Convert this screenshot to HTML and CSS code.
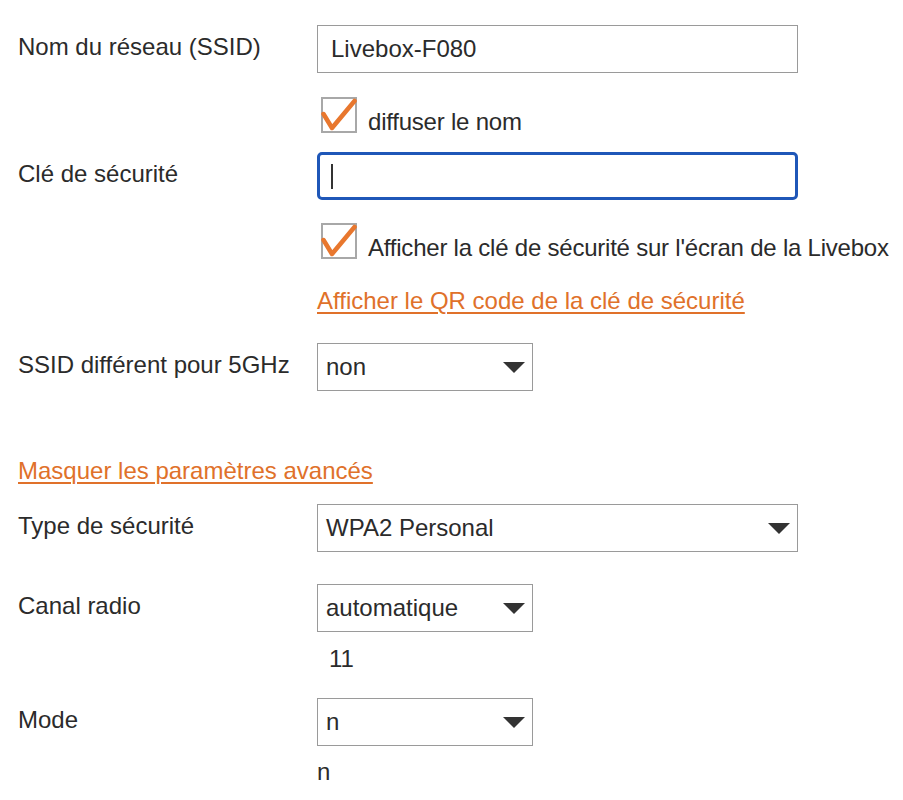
FILE: index.html
```html
<!DOCTYPE html>
<html lang="fr">
<head>
<meta charset="utf-8">
<link rel="stylesheet" href="styles.css">
<title>Wi-Fi</title>
</head>
<body>
<div class="form">
  <div class="row r-ssid">
    <div class="label">Nom du réseau (SSID)</div>
    <div class="ctrl">
      <div class="input wide"><span class="val">Livebox-F080</span></div>
    </div>
  </div>
  <div class="row r-cb1">
    <div class="label"></div>
    <div class="ctrl check">
      <span class="box"><svg width="36" height="36" viewBox="0 0 36 36"><path d="M2.5 17 L11 31 L33.5 4" fill="none" stroke="#e8772e" stroke-width="4.5" stroke-linecap="round" stroke-linejoin="round"/></svg></span>
      <span class="ctext">diffuser le nom</span>
    </div>
  </div>
  <div class="row r-key">
    <div class="label">Clé de sécurité</div>
    <div class="ctrl">
      <div class="input wide focused"><span class="caret"></span></div>
    </div>
  </div>
  <div class="row r-cb2">
    <div class="label"></div>
    <div class="ctrl check">
      <span class="box"><svg width="36" height="36" viewBox="0 0 36 36"><path d="M2.5 17 L11 31 L33.5 4" fill="none" stroke="#e8772e" stroke-width="4.5" stroke-linecap="round" stroke-linejoin="round"/></svg></span>
      <span class="ctext">Afficher la clé de sécurité sur l'écran de la Livebox</span>
    </div>
  </div>
  <div class="row r-qr">
    <div class="label"></div>
    <div class="ctrl"><a class="link" href="#">Afficher le QR code de la clé de sécurité</a></div>
  </div>
  <div class="row r-5g">
    <div class="label">SSID différent pour 5GHz</div>
    <div class="ctrl">
      <div class="select small"><span class="val">non</span><svg class="arrow" width="22" height="11" viewBox="0 0 22 11"><path d="M0 0 H22 L11 11 Z" fill="#333"/></svg></div>
    </div>
  </div>
  <div class="row r-adv">
    <a class="link" href="#">Masquer les paramètres avancés</a>
  </div>
  <div class="row r-type">
    <div class="label">Type de sécurité</div>
    <div class="ctrl">
      <div class="select wide"><span class="val">WPA2 Personal</span><svg class="arrow" width="22" height="11" viewBox="0 0 22 11"><path d="M0 0 H22 L11 11 Z" fill="#333"/></svg></div>
    </div>
  </div>
  <div class="row r-canal">
    <div class="label">Canal radio</div>
    <div class="ctrl">
      <div class="select small"><span class="val">automatique</span><svg class="arrow" width="22" height="11" viewBox="0 0 22 11"><path d="M0 0 H22 L11 11 Z" fill="#333"/></svg></div>
      <div class="note indent">11</div>
    </div>
  </div>
  <div class="row r-mode">
    <div class="label">Mode</div>
    <div class="ctrl">
      <div class="select small"><span class="val">n</span><svg class="arrow" width="22" height="11" viewBox="0 0 22 11"><path d="M0 0 H22 L11 11 Z" fill="#333"/></svg></div>
      <div class="note">n</div>
    </div>
  </div>
</div>
</body>
</html>
```
FILE: styles.css
```css
html, body {
  margin: 0;
  padding: 0;
  background: #fff;
}
body {
  font-family: "Liberation Sans", Arial, Helvetica, sans-serif;
  font-size: 24px;
  line-height: 30px;
  color: #2b2b2b;
}
.form {
  padding: 25px 0 0 18px;
  display: flex;
  flex-direction: column;
}
.row {
  display: flex;
  align-items: flex-start;
}
.label {
  width: 299px;
  flex: none;
  padding-top: 7px;
}
.ctrl {
  display: flex;
  flex-direction: column;
}
.input, .select {
  box-sizing: border-box;
  height: 48px;
  border: 1.5px solid #9a9a9a;
  background: #fff;
  display: flex;
  align-items: center;
}
.wide { width: 481px; }
.small { width: 216px; }
.input { padding-left: 13px; }
.input.focused {
  border: 3px solid #1f57b8;
  border-radius: 5px;
  padding-left: 11px;
}
.caret {
  display: inline-block;
  width: 2px;
  height: 25px;
  background: #333;
}
.select {
  padding: 0 7px 0 8px;
  justify-content: space-between;
}
.arrow { flex: none; margin-top: 1px; }
.check {
  flex-direction: row;
  align-items: flex-start;
  padding-left: 4px;
}
.box {
  box-sizing: border-box;
  width: 36px;
  height: 36px;
  border: 2px solid #a8a8a8;
  background: #fff;
  position: relative;
  flex: none;
}
.box svg {
  position: absolute;
  left: -2px;
  top: -2px;
}
.ctext {
  margin-left: 11px;
  margin-top: 10px;
  margin-bottom: -4px;
  letter-spacing: -0.22px;
}
.link {
  color: #e0712a;
  text-decoration: underline;
  text-underline-offset: 3px;
  text-decoration-thickness: 1.5px;
}
.note {
  margin-top: 12px;
}
.note.indent { padding-left: 12px; }
.r-cb1 { margin-top: 24px; }
.r-key { margin-top: 19px; }
.r-cb2 { margin-top: 23px; }
.r-qr { margin-top: 27px; }
.r-5g { margin-top: 27px; }
.r-adv { margin-top: 65px; }
.r-type { margin-top: 18px; }
.r-canal { margin-top: 32px; }
.r-mode { margin-top: 24px; }
.r-mode .note { margin-top: 11px; padding-left: 0; }
```
